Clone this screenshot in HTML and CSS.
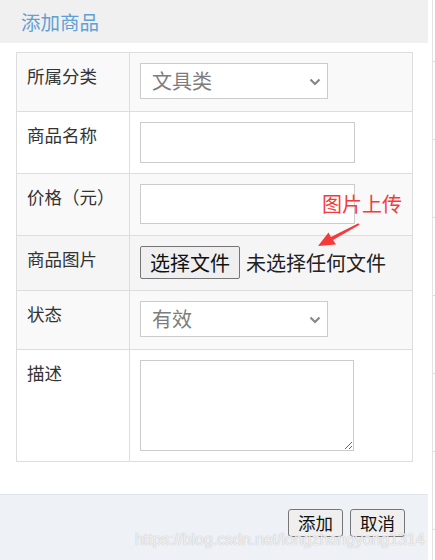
FILE: index.html
```html
<!DOCTYPE html>
<html lang="zh-CN">
<head>
<meta charset="utf-8">
<title>添加商品</title>
<link rel="stylesheet" href="styles.css">
</head>
<body>
<div class="page">
  <div class="dialog">
    <div class="header">添加商品</div>
    <div class="body">
      <div class="form-grid">
        <div class="cell label odd">所属分类</div>
        <div class="cell value odd">
          <span class="select-wrap">
            <select class="select"><option>文具类</option></select>
            <svg class="chev" width="12" height="8" viewBox="0 0 12 8"><path d="M1.5 1.5 L6 6 L10.5 1.5" fill="none" stroke="#888" stroke-width="2.2"/></svg>
          </span>
        </div>

        <div class="cell label">商品名称</div>
        <div class="cell value"><input class="text-input h41" type="text"></div>

        <div class="cell label odd">价格（元）</div>
        <div class="cell value odd"><input class="text-input h40" type="text"></div>

        <div class="cell label hover">商品图片</div>
        <div class="cell value hover file-cell">
          <button class="file-btn" type="button">选择文件</button>
          <span class="file-text">未选择任何文件</span>
        </div>

        <div class="cell label odd">状态</div>
        <div class="cell value odd">
          <span class="select-wrap">
            <select class="select"><option>有效</option></select>
            <svg class="chev" width="12" height="8" viewBox="0 0 12 8"><path d="M1.5 1.5 L6 6 L10.5 1.5" fill="none" stroke="#888" stroke-width="2.2"/></svg>
          </span>
        </div>

        <div class="cell label tall">描述</div>
        <div class="cell value tall"><textarea class="textarea"></textarea></div>
      </div>
    </div>
    <div class="footer">
      <button class="btn" type="button">添加</button>
      <button class="btn" type="button">取消</button>
      <span class="watermark">https://blog.csdn.net/longzhengyong1314</span>
    </div>
    <span class="note">图片上传</span>
    <svg class="arrow" width="48" height="30" viewBox="0 0 48 30">
      <path d="M2 26 L12.5 12.5 L15 17 L42.4 3.2 L43.6 4.8 L17 20 L20 24.5 Z" fill="#f43b3b"/>
    </svg>
  </div>
  <div class="side"><div class="track"></div></div>
</div>
</body>
</html>
```

FILE: styles.css
```css
* { box-sizing: border-box; }
html, body { margin: 0; padding: 0; background: #fff; }
body {
  font-family: "Noto Sans CJK SC", "Noto Sans", sans-serif;
  color: #333;
}
.page {
  display: flex;
  width: 435px;
  height: 560px;
  overflow: hidden;
}
.dialog {
  position: relative;
  width: 428px;
  height: 560px;
  display: flex;
  flex-direction: column;
}
.header {
  height: 43px;
  line-height: 43px;
  background: #f0f0f0;
  padding-left: 21px;
  font-size: 19.5px;
  color: #5fa1d5;
}
.body {
  padding: 9px 16px 0 16px;
  flex: none;
}
.form-grid {
  display: grid;
  grid-template-columns: 113px 283px;
  grid-template-rows: 59px 62px 62px 55px 59px 112px;
  border-top: 1px solid #dddddd;
  border-left: 1px solid #dddddd;
  width: 397px;
}
.cell {
  border-right: 1px solid #dddddd;
  border-bottom: 1px solid #dddddd;
  padding: 10px;
  background: #fff;
}
.cell.odd { background: #f9f9f9; }
.cell.hover { background: #f5f5f5; }
.label {
  font-size: 17.5px;
  line-height: 25px;
  color: #333;
}
.select-wrap {
  position: relative;
  display: block;
  width: 188px;
  height: 36px;
}
.select {
  appearance: none;
  -webkit-appearance: none;
  width: 188px;
  height: 36px;
  border: 1px solid #cccccc;
  border-radius: 0;
  background: #fff;
  padding: 0 0 0 11px;
  margin: 0;
  font-family: "Noto Sans CJK SC", sans-serif;
  font-size: 20px;
  color: #7d7d7d;
  line-height: 34px;
}
.chev {
  position: absolute;
  right: 7px;
  top: 15px;
}
.text-input {
  display: block;
  width: 215px;
  border: 1px solid #cccccc;
  background: #fff;
  margin: 0;
  padding: 0;
  outline: none;
}
.h41 { height: 41px; }
.h40 { height: 40px; }
.file-cell {
  display: flex;
  align-items: flex-start;
  gap: 6px;
}
.file-btn {
  width: 100px;
  height: 33px;
  margin: 0;
  padding: 0;
  border: 1px solid #767676;
  border-radius: 2px;
  background: #efefef;
  font-family: "Noto Sans CJK SC", sans-serif;
  font-size: 20px;
  color: #111;
  line-height: 31px;
}
.file-text {
  font-size: 20px;
  line-height: 33px;
  color: #222;
}
.textarea {
  display: block;
  width: 214px;
  height: 91px;
  border: 1px solid #cccccc;
  margin: 0;
  padding: 0;
  resize: both;
  outline: none;
}
.footer {
  position: relative;
  margin-top: 32px;
  flex: 1;
  background: #eef1f6;
  border-top: 1px solid #e1e5eb;
  display: flex;
  justify-content: flex-end;
  align-items: flex-start;
  gap: 7px;
  padding: 14px 23px 0 0;
}
.btn {
  width: 55px;
  height: 28px;
  margin: 0;
  padding: 0;
  border: 1px solid #767676;
  border-radius: 3px;
  background: #efefef;
  font-family: "Noto Sans CJK SC", sans-serif;
  font-size: 17.5px;
  line-height: 26px;
  color: #111;
}
.watermark {
  position: absolute;
  left: 135px;
  top: 35px;
  font-family: "Liberation Sans", Arial, sans-serif;
  font-size: 15.9px;
  line-height: 20px;
  color: rgba(255, 255, 255, 0.8);
  text-shadow: 0 0 1px rgba(140, 140, 140, 0.7);
  white-space: nowrap;
}
.note {
  position: absolute;
  left: 322px;
  top: 190px;
  font-size: 20px;
  line-height: 28px;
  color: #f43b3b;
}
.arrow {
  position: absolute;
  left: 316px;
  top: 220px;
}
.side {
  width: 7px;
  padding-left: 4px;
  background: #fff;
}
.track {
  width: 3px;
  height: 560px;
  border-left: 1px solid #e2e2e2;
  background: repeating-linear-gradient(to bottom, transparent 0, transparent 61px, #dcdcdc 61px, #dcdcdc 62px, transparent 62px, transparent 78px);
}
```
